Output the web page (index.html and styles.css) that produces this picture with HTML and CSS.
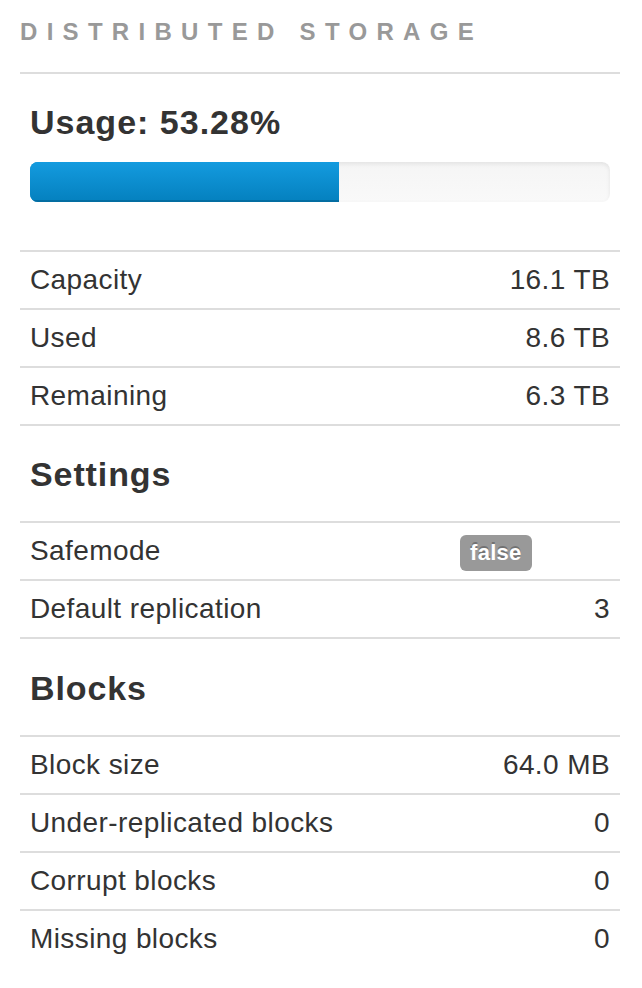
FILE: index.html
```html
<!DOCTYPE html>
<html>
<head>
<meta charset="utf-8">
<link rel="stylesheet" href="styles.css">
</head>
<body>
<div class="panel">
  <h2 class="title">DISTRIBUTED STORAGE</h2>
  <hr class="rule">
  <h3 class="usage">Usage: 53.28%</h3>
  <div class="progress"><div class="bar" style="width: 53.28%"></div></div>
  <table class="stats">
    <tr><td class="label">Capacity</td><td class="value">16.1 TB</td></tr>
    <tr><td class="label">Used</td><td class="value">8.6 TB</td></tr>
    <tr><td class="label">Remaining</td><td class="value">6.3 TB</td></tr>
    <tr><td class="section" colspan="2">Settings</td></tr>
    <tr><td class="label">Safemode</td><td class="value left"><span class="badge">false</span></td></tr>
    <tr><td class="label">Default replication</td><td class="value">3</td></tr>
    <tr><td class="section second" colspan="2">Blocks</td></tr>
    <tr><td class="label">Block size</td><td class="value">64.0 MB</td></tr>
    <tr><td class="label">Under-replicated blocks</td><td class="value">0</td></tr>
    <tr><td class="label">Corrupt blocks</td><td class="value">0</td></tr>
    <tr><td class="label">Missing blocks</td><td class="value">0</td></tr>
  </table>
</div>
</body>
</html>
```

FILE: styles.css
```css
html, body {
  margin: 0;
  padding: 0;
  background: #fff;
}
body {
  font-family: "Liberation Sans", Arial, Helvetica, sans-serif;
  color: #333;
}
.panel {
  width: 600px;
  padding: 17px 22px 0 20px;
}
.title {
  margin: 0;
  font-size: 24px;
  line-height: 30px;
  font-weight: bold;
  letter-spacing: 9.3px;
  color: #999;
  white-space: nowrap;
}
.rule {
  margin: 25px 0 0 0;
  border: 0;
  border-top: 2px solid #ddd;
  height: 0;
}
.usage {
  margin: 28px 0 0 0;
  padding-left: 10px;
  font-size: 34px;
  line-height: 40px;
  font-weight: bold;
  letter-spacing: 1px;
  color: #333;
}
.progress {
  margin: 20px 10px 0 10px;
  height: 40px;
  border-radius: 8px;
  overflow: hidden;
  background-color: #f7f7f7;
  background-image: linear-gradient(to bottom, #f5f5f5, #f9f9f9);
  box-shadow: inset 0 2px 4px rgba(0, 0, 0, 0.08);
}
.bar {
  height: 100%;
  background-color: #0e90d2;
  background-image: linear-gradient(to bottom, #149bdf, #0480be);
  box-shadow: inset 0 -2px 0 rgba(0, 0, 0, 0.15);
}
.stats {
  margin-top: 48px;
  width: 600px;
  border-collapse: collapse;
  border-spacing: 0;
  font-size: 28px;
  line-height: 40px;
  letter-spacing: 0.4px;
}
.stats td {
  border-top: 2px solid #ddd;
  padding: 8px 10px;
  vertical-align: top;
}
.stats .value {
  width: 150px;
  text-align: right;
  white-space: nowrap;
}
.stats .value.left {
  text-align: left;
}
.stats .section {
  padding: 28px 10px 27px 10px;
  font-size: 34px;
  font-weight: bold;
  letter-spacing: 0.9px;
}
.stats .section.second {
  padding: 29px 10px 27px 10px;
}
.badge {
  display: inline-block;
  padding: 4px 10px;
  font-size: 22px;
  line-height: 28px;
  font-weight: bold;
  letter-spacing: 0.3px;
  color: #fff;
  background-color: #999;
  border-radius: 6px;
  text-shadow: 0 -2px 0 rgba(0, 0, 0, 0.25);
  vertical-align: baseline;
  white-space: nowrap;
}
```
